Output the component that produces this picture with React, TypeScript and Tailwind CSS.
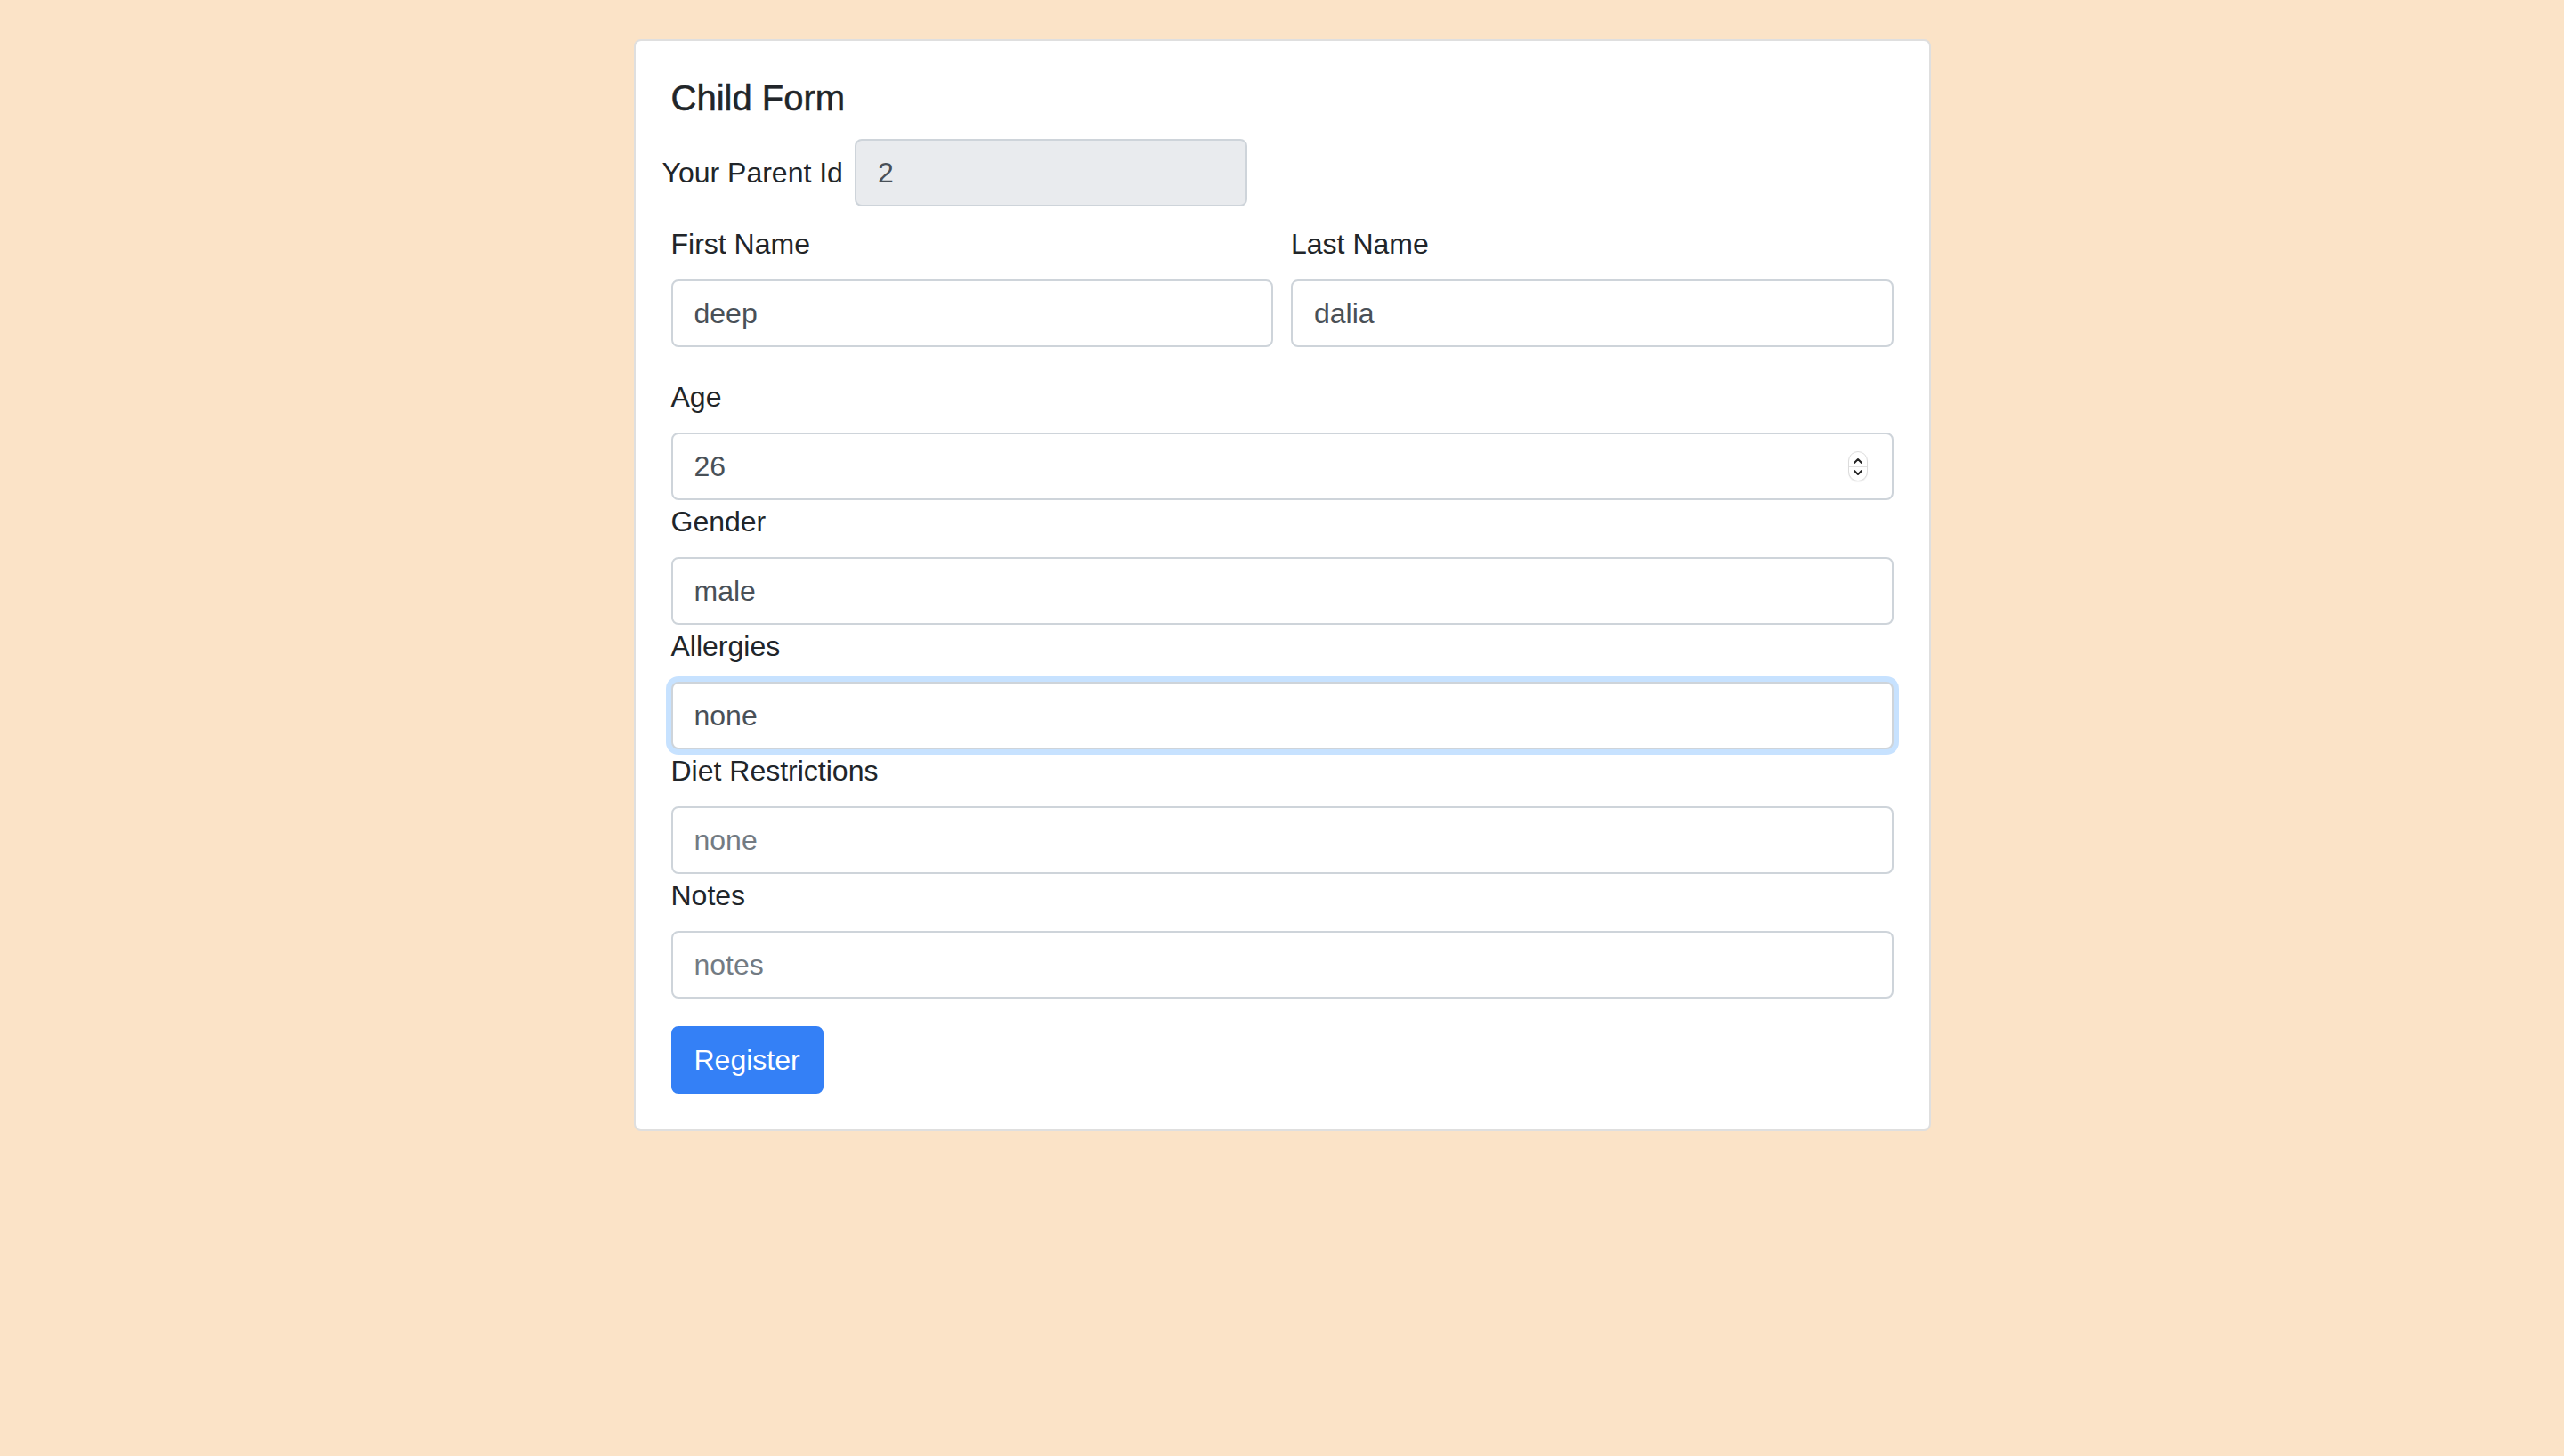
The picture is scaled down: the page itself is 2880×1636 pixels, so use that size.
import React from "react";

const inputBase =
    "block w-full h-[76px] px-[24px] rounded-[8px] border-2 border-[#ced4da] bg-white text-[32px] leading-[48px] text-[#495057] placeholder:text-[#737b83] outline-none";

const labelBase = "block text-[32px] leading-[48px] mb-[16px] text-[#212529]";

const Field: React.FC<{ label: string; value?: string; placeholder?: string; focused?: boolean }> = ({
    label,
    value,
    placeholder,
    focused,
}) => (
    <div>
        <label className={labelBase}>{label}</label>
        <input
            readOnly
            defaultValue={value}
            placeholder={placeholder}
            className={
                focused
                    ? inputBase + " border-[#80b4f7] shadow-[0_0_0_6px_rgba(0,123,255,0.22)]"
                    : inputBase
            }
        />
    </div>
);

// the little up/down stepper that Safari paints inside number inputs
const Stepper = () => (
    <div className="absolute right-[29px] top-1/2 -translate-y-1/2 w-[22px] h-[34px] rounded-[11px] border border-[#dcdcdc] bg-white flex flex-col items-center justify-center shadow-[0_1px_1px_rgba(0,0,0,0.06)]">
        <svg width="12" height="10" viewBox="0 0 12 10" className="mb-[1px]">
            <path d="M2 7 L6 3 L10 7" fill="none" stroke="#222" strokeWidth="2" strokeLinecap="round" strokeLinejoin="round" />
        </svg>
        <div className="w-full h-px bg-[#e2e2e2]" />
        <svg width="12" height="10" viewBox="0 0 12 10" className="mt-[1px]">
            <path d="M2 3 L6 7 L10 3" fill="none" stroke="#222" strokeWidth="2" strokeLinecap="round" strokeLinejoin="round" />
        </svg>
    </div>
);

const App: React.FC = () => {
    return (
        <div className="min-h-[1636px] w-full bg-[#fbe3c7] pt-[44px] font-['Liberation_Sans',Arial,sans-serif] text-[#212529]">
            <div className="mx-auto w-[1457px] bg-white border-2 border-[rgba(0,0,0,0.125)] rounded-[8px] p-[40px]">
                <h5 className="text-[40px] leading-[48px] font-normal [-webkit-text-stroke:0.5px_#212529] mb-[22px]">
                    Child Form
                </h5>

                <div className="flex flex-row items-center">
                    <label className="text-[32px] leading-[48px] -ml-[10px] mr-[13px]">Your Parent Id</label>
                    <input
                        readOnly
                        disabled
                        defaultValue="2"
                        className="w-[441px] h-[76px] px-[24px] rounded-[8px] border-2 border-[#ced4da] bg-[#e9ebee] text-[32px] text-[#495057] outline-none"
                    />
                </div>

                <div className="grid grid-cols-2 gap-x-[20px] mt-[18px] mb-[32px]">
                    <Field label="First Name" value="deep" />
                    <Field label="Last Name" value="dalia" />
                </div>

                <div>
                    <label className={labelBase}>Age</label>
                    <div className="relative">
                        <input readOnly defaultValue="26" className={inputBase} />
                        <Stepper />
                    </div>
                </div>
                <Field label="Gender" value="male" />
                <Field label="Allergies" value="none" focused />
                <Field label="Diet Restrictions" placeholder="none" />
                <Field label="Notes" placeholder="notes" />

                <button className="mt-[31px] h-[76px] px-[24px] rounded-[8px] border-2 border-[#3480f6] bg-[#3480f6] text-white text-[32px] leading-[48px]">
                    Register
                </button>
            </div>
        </div>
    );
};

export default App;
